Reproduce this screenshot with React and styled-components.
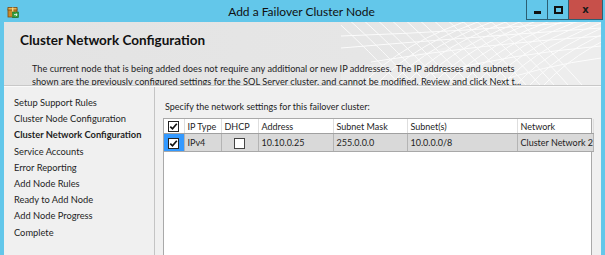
import React from "react";
import styled, { createGlobalStyle } from "styled-components";

const GlobalStyle = createGlobalStyle`
  html, body {
    margin: 0;
    padding: 0;
    background: #63c7ea;
  }
  body {
    font-family: Lato, "Open Sans", sans-serif;
    color: #1e1e1e;
  }
`;

const Window = styled.div`
  width: 605px;
  height: 255px;
  overflow: hidden;
  display: flex;
  flex-direction: column;
  background: #63c7ea;
`;

const TitleBar = styled.div`
  height: 22px;
  flex: none;
  display: flex;
  align-items: flex-start;
`;

const AppIcon = styled.div`
  width: 12px;
  height: 12px;
  margin: 6px 0 0 7px;
  display: flex;
`;

const Title = styled.div`
  flex: 1;
  text-align: center;
  font-size: 12px;
  line-height: 24px;
  color: #111;
  padding-left: 58px;
`;

const Controls = styled.div`
  display: flex;
  height: 20px;
  margin-right: 2px;
`;

const CtrlButton = styled.div`
  width: ${p => p.w}px;
  height: 19px;
  border: 1px solid #2b5f73;
  border-top: none;
  border-left-width: ${p => (p.first ? 1 : 0)}px;
  background: ${p => (p.close ? "#c7504a" : "#63c7ea")};
  display: flex;
  align-items: center;
  justify-content: center;
  font-family: "DejaVu Sans", sans-serif;
  font-weight: bold;
  font-size: 10px;
  color: #1a1a1a;
`;

const MinGlyph = styled.div`
  width: 7px;
  height: 3px;
  background: #111;
  margin-top: 5px;
`;

const MaxGlyph = styled.div`
  width: 5px;
  height: 4px;
  border: 2px solid #111;
`;

const Body = styled.div`
  flex: 1;
  margin: 0 4px;
  display: flex;
  flex-direction: column;
  background: #f0f0f0;
  min-height: 0;
`;

const Header = styled.div`
  height: 64px;
  flex: none;
  position: relative;
  overflow: hidden;
  background: linear-gradient(to right, #e3e3e3 0%, #e6e6e6 60%, #ececec 100%);
  border-bottom: 1px solid #c8c8c8;
  box-shadow: 0 1px 0 #fafafa;
  padding: 9px 0 0 16px;
  box-sizing: border-box;
`;

const Mesh = styled.svg`
  position: absolute;
  right: 0;
  top: 0;
  pointer-events: none;
`;

const HeaderTitle = styled.h1`
  margin: 0;
  font-size: 13.5px;
  font-weight: bold;
  line-height: 18px;
  color: #111;
  position: relative;
`;

const Description = styled.p`
  margin: 14px 0 0 12px;
  font-size: 9.2px;
  line-height: 12.5px;
  color: #1e1e1e;
  position: relative;
  white-space: pre;
`;

const Content = styled.div`
  flex: 1;
  display: flex;
  min-height: 0;
  margin-top: 1px;
`;

const Nav = styled.ul`
  list-style: none;
  margin: 0;
  padding: 8px 0 0 10px;
  width: 140px;
  flex: none;
  border-right: 1px solid #c4c4c4;
`;

const NavItem = styled.li`
  font-size: 9.3px;
  line-height: 16.2px;
  font-weight: ${p => (p.active ? "bold" : "normal")};
  white-space: nowrap;
  color: #1e1e1e;
`;

const Main = styled.div`
  flex: 1;
  display: flex;
  flex-direction: column;
  padding: 13px 9px 0 8px;
  min-width: 0;
`;

const Prompt = styled.div`
  font-size: 9px;
  line-height: 13px;
  margin: 0 0 5px 2px;
`;

const Grid = styled.div`
  flex: 1;
  background: #fff;
  border: 1px solid #a9a9a9;
  border-bottom: none;
`;

const Table = styled.table`
  border-collapse: collapse;
  table-layout: fixed;
  width: 100%;
  font-size: 9px;
`;

const Th = styled.th`
  height: 14px;
  padding: 0 0 0 ${p => (p.center ? 0 : 3)}px;
  text-align: ${p => (p.center ? "center" : "left")};
  font-weight: normal;
  border-right: 1px solid #dedede;
  border-bottom: 1px solid #a0a0a0;
  white-space: nowrap;
  overflow: hidden;
  color: #1e1e1e;
`;

const Td = styled.td`
  height: 17px;
  padding: 0 0 0 ${p => (p.center ? 0 : 3)}px;
  text-align: ${p => (p.center ? "center" : "left")};
  background: ${p => (p.selected ? "#3399ff" : "#d9d9d9")};
  border-right: 1px solid #b4b4b4;
  border-bottom: 1px solid #a8a8a8;
  white-space: nowrap;
  overflow: hidden;
  color: #1e1e1e;
`;

const Box = styled.span`
  display: inline-flex;
  width: 11px;
  height: 11px;
  box-sizing: border-box;
  border: 1px solid ${p => (p.dark ? "#222" : "#444")};
  background: #fff;
  vertical-align: middle;
  align-items: center;
  justify-content: center;
`;

const Check = ({ checked }) => (
  <Box dark={checked}>
    {checked && (
      <svg width="9" height="9" viewBox="0 0 9 9">
        <path d="M1.3 4.6 L3.5 6.8 L7.8 1.8" fill="none" stroke="#111" strokeWidth="1.7" />
      </svg>
    )}
  </Box>
);

const BoxIcon = () => (
  <svg width="12" height="12" viewBox="0 0 12 12">
    <rect x="1" y="3" width="9" height="8" fill="#c98a2b" stroke="#7a4a12" strokeWidth="0.8" />
    <rect x="1" y="1.5" width="9" height="2.5" fill="#e8b451" stroke="#7a4a12" strokeWidth="0.8" />
    <rect x="5" y="1.5" width="1.4" height="9.5" fill="#f3d68a" />
    <rect x="5.5" y="6" width="6" height="5.5" fill="#2f9d3a" stroke="#1b6a22" strokeWidth="0.6" />
    <path d="M7 8.7 H10 M8.8 7.4 L10.2 8.7 L8.8 10" stroke="#fff" strokeWidth="0.9" fill="none" />
  </svg>
);

const MeshArt = () => {
  const lines = [];
  for (let i = 0; i < 14; i++) {
    const x = 20 + i * 14;
    lines.push(<path key={"a" + i} d={`M${x} 64 Q ${x + 40} 20 ${x + 120} -6`} />);
    lines.push(<path key={"b" + i} d={`M${x + 40} 64 Q ${x + 10} 30 ${x - 30} -6`} />);
  }
  return (
    <Mesh width="260" height="64" viewBox="0 0 260 64">
      <path d="M0 48 Q 90 30 140 16 Q 190 2 260 -4 L260 64 L0 64 Z" fill="#efefef" opacity="0.55" />
      <g fill="none" stroke="#ffffff" strokeWidth="1" opacity="0.85">
        {lines}
        <path d="M0 14 Q 120 10 260 -2" />
        <path d="M0 26 Q 120 16 260 6" />
        <path d="M30 40 Q 140 22 260 14" />
        <path d="M90 52 Q 170 32 260 24" />
        <path d="M150 62 Q 200 44 260 36" />
      </g>
    </Mesh>
  );
};

const steps = [
  "Setup Support Rules",
  "Cluster Node Configuration",
  "Cluster Network Configuration",
  "Service Accounts",
  "Error Reporting",
  "Add Node Rules",
  "Ready to Add Node",
  "Add Node Progress",
  "Complete",
];

const columns = [
  { w: 20, label: <Check checked />, center: true },
  { w: 37, label: "IP Type" },
  { w: 37, label: "DHCP" },
  { w: 75, label: "Address" },
  { w: 74, label: "Subnet Mask" },
  { w: 110, label: "Subnet(s)" },
  { w: 76, label: "Network" },
];

export default function App() {
  return (
    <>
      <GlobalStyle />
      <Window>
        <TitleBar>
          <AppIcon>
            <BoxIcon />
          </AppIcon>
          <Title>Add a Failover Cluster Node</Title>
          <Controls>
            <CtrlButton w={20} first>
              <MinGlyph />
            </CtrlButton>
            <CtrlButton w={20}>
              <MaxGlyph />
            </CtrlButton>
            <CtrlButton w={33} close>
              x
            </CtrlButton>
          </Controls>
        </TitleBar>
        <Body>
          <Header>
            <MeshArt />
            <HeaderTitle>Cluster Network Configuration</HeaderTitle>
            <Description>
              {"The current node that is being added does not require any additional or new IP addresses.  The IP addresses and subnets\nshown are the previously configured settings for the SQL Server cluster, and cannot be modified. Review and click Next t..."}
            </Description>
          </Header>
          <Content>
            <Nav>
              {steps.map(s => (
                <NavItem key={s} active={s === "Cluster Network Configuration"}>
                  {s}
                </NavItem>
              ))}
            </Nav>
            <Main>
              <Prompt>Specify the network settings for this failover cluster:</Prompt>
              <Grid>
                <Table>
                  <colgroup>
                    {columns.map((c, i) => (
                      <col key={i} style={{ width: c.w }} />
                    ))}
                  </colgroup>
                  <thead>
                    <tr>
                      {columns.map((c, i) => (
                        <Th key={i} center={c.center}>
                          {c.label}
                        </Th>
                      ))}
                    </tr>
                  </thead>
                  <tbody>
                    <tr>
                      <Td center selected>
                        <Check checked />
                      </Td>
                      <Td>IPv4</Td>
                      <Td center>
                        <Check />
                      </Td>
                      <Td>10.10.0.25</Td>
                      <Td>255.0.0.0</Td>
                      <Td>10.0.0.0/8</Td>
                      <Td>Cluster Network 2</Td>
                    </tr>
                  </tbody>
                </Table>
              </Grid>
            </Main>
          </Content>
        </Body>
      </Window>
    </>
  );
}
